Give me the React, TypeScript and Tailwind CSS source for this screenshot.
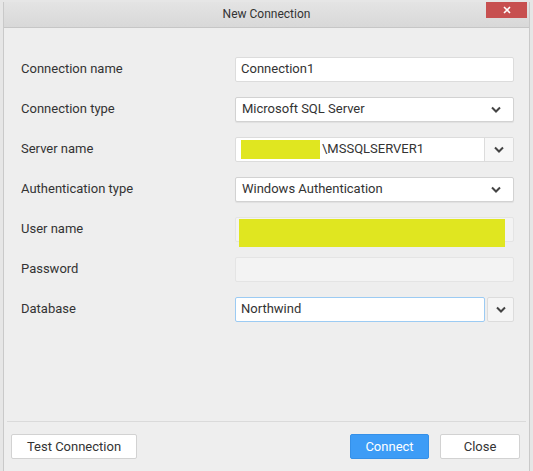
import React from "react";

const Chevron = () => (
  <svg width="10" height="7" viewBox="0 0 10 7" className="block">
    <polyline points="1,1.5 5,5.5 9,1.5" fill="none" stroke="#444" strokeWidth="2" />
  </svg>
);

const Row = ({ label, children, muted }: { label: string; children: React.ReactNode; muted?: boolean }) => (
  <div className="flex items-center h-[40px]">
    <div className={`w-[214px] text-[13px] ${muted ? "text-[#444]" : "text-[#333]"}`}>{label}</div>
    <div className="w-[279px] h-[25px]">{children}</div>
  </div>
);

export default function App() {
  return (
    <div
      className="w-[533px] h-[471px] bg-[#e6e6e6] overflow-hidden pl-[3px] pt-[2px]"
      style={{ fontFamily: "Roboto, 'Liberation Sans', sans-serif" }}
    >
      <div className="w-[527px] h-[480px] bg-[#eeeeee] border border-[#c9c9c9] border-t-0 flex flex-col">
        {/* Title bar */}
        <div className="relative h-[26px] bg-gradient-to-b from-[#e4e4e4] to-[#d8d8d8] border-b border-[#c6c6c6] flex items-center justify-center">
          <span className="text-[12px] text-[#333] pb-[2px]">New Connection</span>
          <div className="absolute right-[2px] top-0 w-[41px] h-[16px] bg-[#c75050] flex items-center justify-center">
            <svg width="8" height="8" viewBox="0 0 8 8">
              <path d="M1 1 L7 7 M7 1 L1 7" stroke="#fff" strokeWidth="1.6" />
            </svg>
          </div>
        </div>

        {/* Body */}
        <div className="h-[393px] pl-[17px] pt-[21px]">
          <Row label="Connection name">
            <div className="h-full bg-white border border-[#dcdcdc] rounded-[2px] flex items-center pl-[5px] text-[13px] text-[#333]">
              Connection1
            </div>
          </Row>
          <Row label="Connection type">
            <div className="h-full bg-white border border-[#d2d2d2] rounded-[2px] flex items-center justify-between pl-[6px] pr-[12px] text-[13px] text-[#333] shadow-[0_1px_1px_rgba(0,0,0,0.06)]">
              <span>Microsoft SQL Server</span>
              <Chevron />
            </div>
          </Row>
          <Row label="Server name">
            <div className="h-full flex border border-[#dcdcdc] rounded-[2px] bg-white">
              <div className="flex-1 flex items-center pl-[5px] text-[13px] text-[#333]">
                <span className="w-[79px] h-[19px] bg-[#e0e620] mr-[2px]"></span>
                <span>\MSSQLSERVER1</span>
              </div>
              <div className="w-[29px] border-l border-[#dcdcdc] bg-[#f7f7f7] flex items-center justify-center">
                <Chevron />
              </div>
            </div>
          </Row>
          <Row label="Authentication type">
            <div className="h-full bg-white border border-[#d2d2d2] rounded-[2px] flex items-center justify-between pl-[6px] pr-[12px] text-[13px] text-[#333] shadow-[0_1px_1px_rgba(0,0,0,0.06)]">
              <span>Windows Authentication</span>
              <Chevron />
            </div>
          </Row>
          <Row label="User name">
            <div className="relative h-full bg-[#f3f3f3] border border-[#e4e4e4] rounded-[2px]">
              <div className="absolute left-[3px] top-[1px] w-[266px] h-[28px] bg-[#e0e620]"></div>
            </div>
          </Row>
          <Row label="Password">
            <div className="h-full bg-[#f3f3f3] border border-[#e4e4e4] rounded-[2px]"></div>
          </Row>
          <Row label="Database">
            <div className="h-full flex">
              <div className="w-[250px] h-full bg-white border border-[#9ccbf3] rounded-[2px] flex items-center pl-[5px] text-[13px] text-[#333]">
                Northwind
              </div>
              <div className="ml-[2px] flex-1 border border-[#dcdcdc] rounded-[2px] bg-[#f5f5f5] flex items-center justify-center">
                <Chevron />
              </div>
            </div>
          </Row>
        </div>

        <div className="h-px mx-[3px] bg-[#dadada]"></div>

        {/* Footer */}
        <div className="flex items-start justify-between pl-[7px] pr-[9px] pt-[12px]">
          <button className="w-[126px] h-[25px] bg-white border border-[#d2d2d2] rounded-[2px] text-[13px] text-[#333]">
            Test Connection
          </button>
          <div className="flex gap-[11px]">
            <button className="w-[79px] h-[25px] bg-[#3d9cf6] border border-[#3590e8] rounded-[2px] text-[13px] text-white">
              Connect
            </button>
            <button className="w-[80px] h-[25px] bg-white border border-[#d2d2d2] rounded-[2px] text-[13px] text-[#333]">
              Close
            </button>
          </div>
        </div>
      </div>
    </div>
  );
}
